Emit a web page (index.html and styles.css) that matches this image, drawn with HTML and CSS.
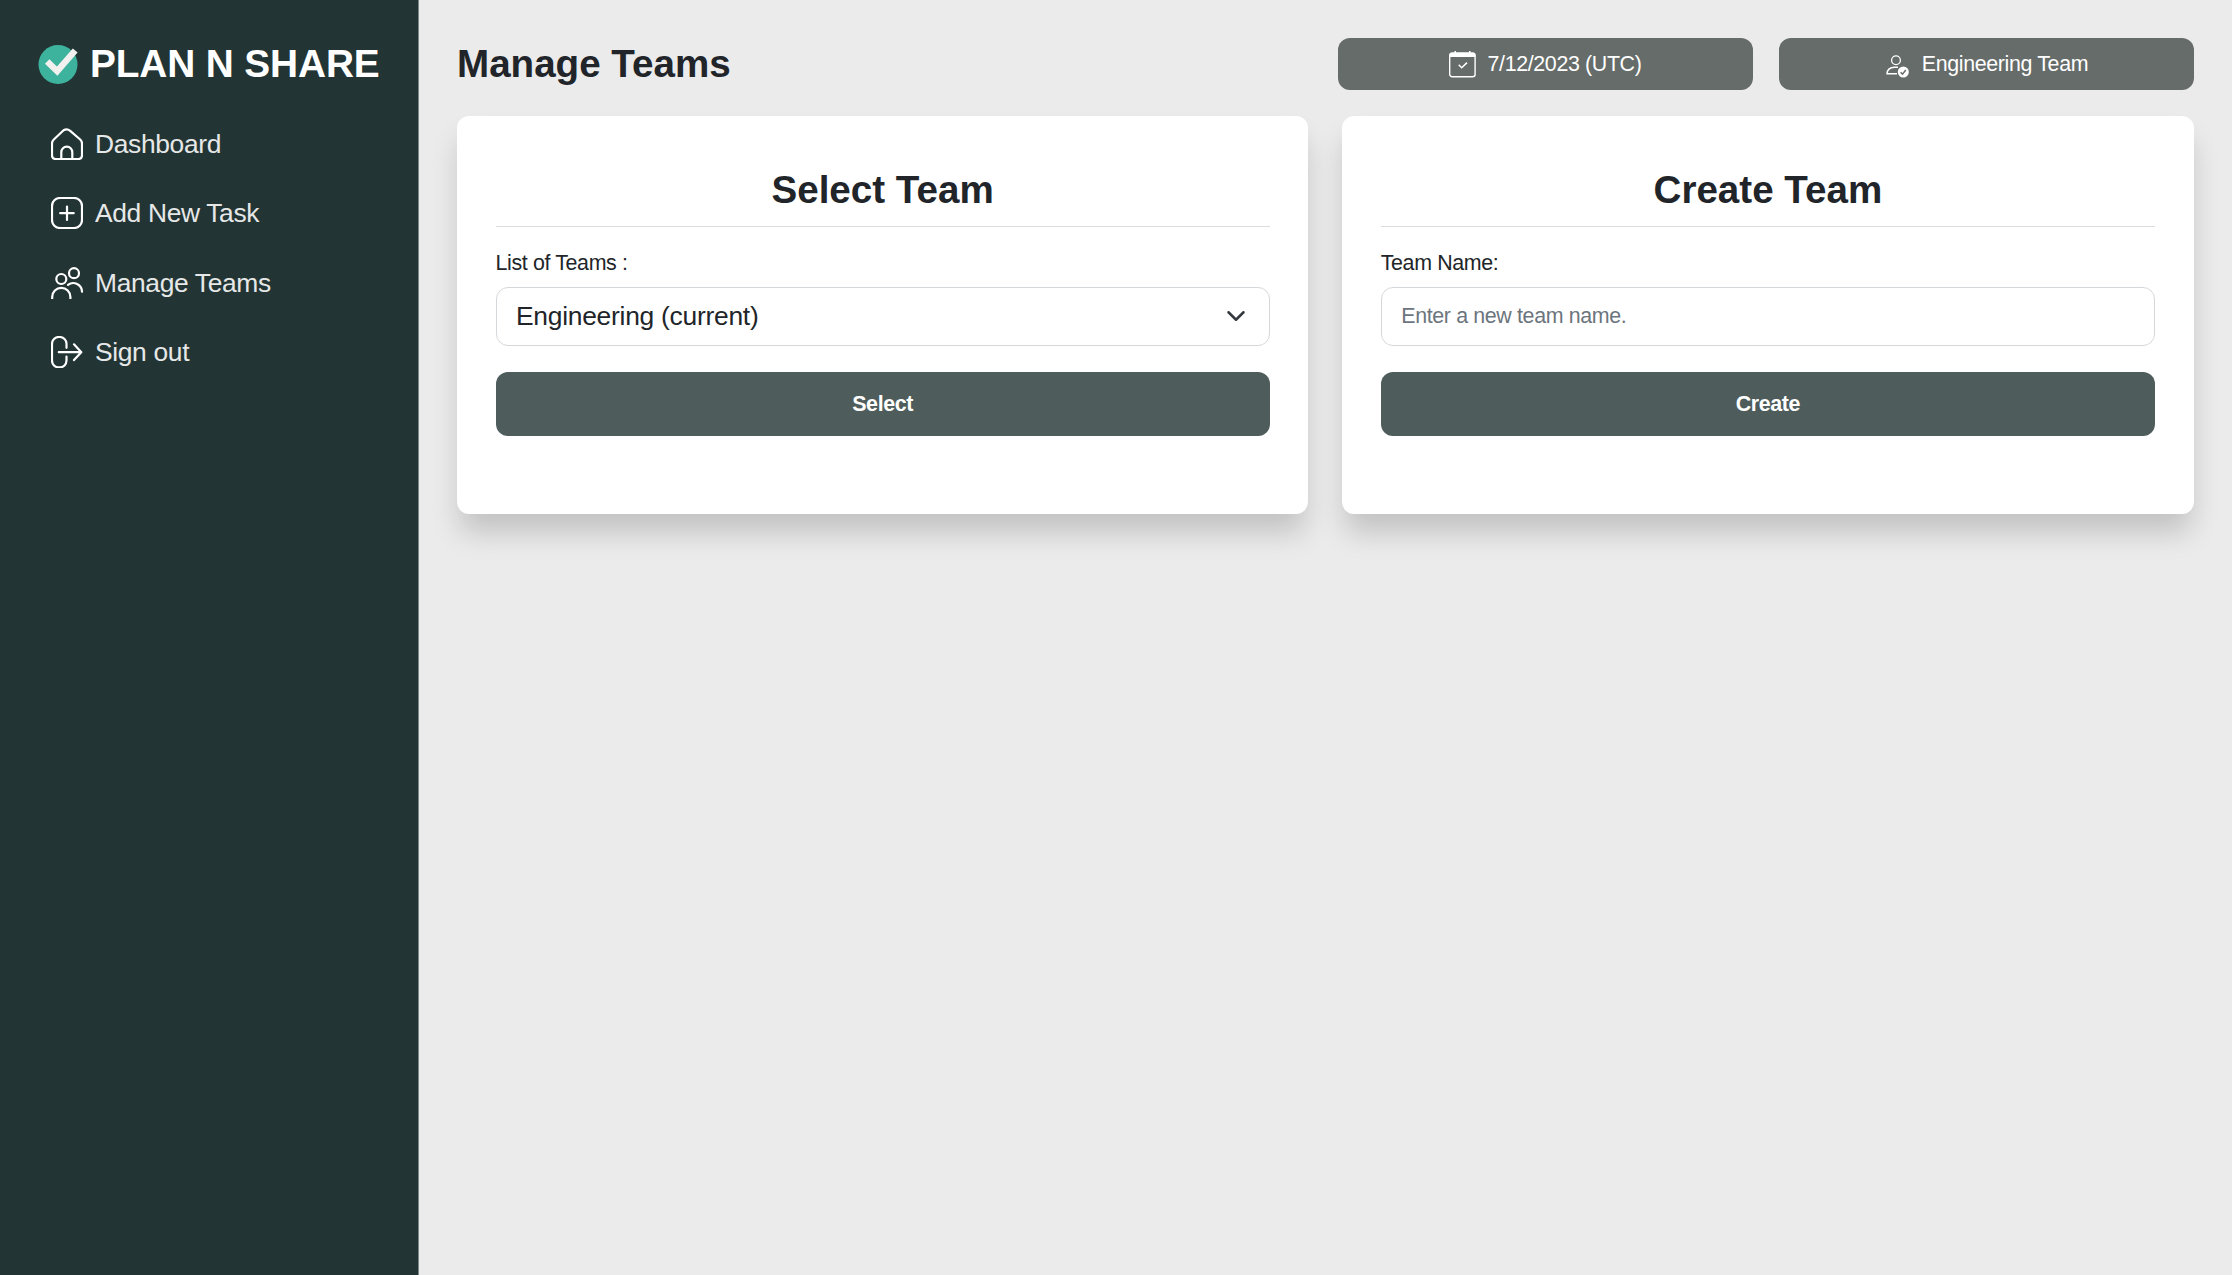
FILE: index.html
```html
<!DOCTYPE html>
<html lang="en">
<head>
<meta charset="utf-8">
<title>Plan N Share - Manage Teams</title>
<link rel="stylesheet" href="styles.css">
</head>
<body>
<div class="app">
  <aside class="sidebar">
    <a class="brand">
      <svg class="brand-icon" viewBox="0 0 40 40"><circle cx="20" cy="20.500" r="19.500" fill="#3db39e"/><path d="M9.200 17.500l10 9.700L37.200 6.500" fill="none" stroke="#f2f1ef" stroke-width="6.400"/></svg>
      <span>PLAN N SHARE</span>
    </a>
    <nav class="menu">
      <a class="menu-item"><svg class="menu-icon" viewBox="0 0 32 32"><path d="M12.600 2.300Q16 .2 19.200 2.800L29.200 11.500Q31 13.200 31 15.500V27.500Q31 31 27.500 31H4.500Q1 31 1 27.500V15.500Q1 13.200 2.800 11.500L12.600 2.300zM10.300 31V24.200a5.500 5.500 0 0 1 11 0V31"/></svg><span>Dashboard</span></a>
      <a class="menu-item"><svg class="menu-icon" viewBox="0 0 32 32"><rect x="1" y="1" width="30" height="30" rx="8"/><path d="M16 9.500v13.500M9.200 16.200h13.500"/></svg><span>Add New Task</span></a>
      <a class="menu-item"><svg class="menu-icon" viewBox="0 0 32 32"><circle cx="10.300" cy="12" r="5"/><circle cx="23" cy="6.200" r="5"/><path d="M1.200 31.500v-1.500a9.100 9.100 0 0 1 18.200 0v1.500M17 17.800a8.800 8.800 0 0 1 14 6.900"/></svg><span>Manage Teams</span></a>
      <a class="menu-item"><svg class="menu-icon" viewBox="0 0 32 32"><path d="M15.500 11.800V7.800a6.800 6.800 0 0 0-6.800-6.800h-.900A6.800 6.800 0 0 0 1 7.800V24.600a6.800 6.800 0 0 0 6.800 6.800h.9a6.800 6.800 0 0 0 6.800-6.800v-4M7.800 16.200H30.300M23 8.300l7.300 7.900-7.300 7.900"/></svg><span>Sign out</span></a>
    </nav>
  </aside>
  <main class="content">
    <header class="topbar">
      <h1 class="title">Manage Teams</h1>
      <div class="pills">
        <div class="pill">
          <svg class="pill-calendar" viewBox="0 0 27 27"><rect x=".7" y="2.200" width="25.400" height="23.600" rx="2.500" fill="none" stroke="#fff" stroke-width="1.400"/><path d="M.5 6V3.800Q.5 1.500 2.800 1.500H5.500V0H7v1.500H20V0h1.500v1.500h2.600q2.300 0 2.300 2.300V6z" fill="#fff"/><path d="M9.700 13.800l3 3 5.300-5.200" fill="none" stroke="#fff" stroke-width="1.500"/></svg>
          <span>7/12/2023 (UTC)</span>
        </div>
        <div class="pill">
          <svg class="pill-user" viewBox="0 0 23 23"><circle cx="10" cy="5.300" r="4.400" fill="none" stroke="#fff" stroke-width="1.300"/><path d="M12 12.200H8.500Q1.200 12.600 1 18.700H11" fill="none" stroke="#fff" stroke-width="1.400"/><circle cx="17.300" cy="17" r="5.500" fill="#fff"/><path d="M14.600 17.200l1.900 2 3.300-4.200" fill="none" stroke="#666c69" stroke-width="1.500"/></svg>
          <span>Engineering Team</span>
        </div>
      </div>
    </header>
    <div class="cards">
      <section class="card">
        <h2 class="card-title">Select Team</h2>
        <label class="label">List of Teams :</label>
        <div class="field select"><span>Engineering (current)</span><svg class="chevron" viewBox="0 0 16 16"><path d="m2 5 6 6 6-6" fill="none" stroke="#343a40" stroke-width="2" stroke-linecap="round" stroke-linejoin="round"/></svg></div>
        <button class="button">Select</button>
      </section>
      <section class="card">
        <h2 class="card-title">Create Team</h2>
        <label class="label" for="team-name">Team Name:</label>
        <input class="field" id="team-name" placeholder="Enter a new team name.">
        <button class="button">Create</button>
      </section>
    </div>
  </main>
</div>
</body>
</html>
```
FILE: styles.css
```css
* { box-sizing: border-box; }
body { margin: 0; font: 21.4px/30px "Liberation Sans", Arial, sans-serif; letter-spacing: -.36px; color: #212529; background: #ebebeb; }
.app { display: flex; min-height: 100vh; }
.sidebar { width: 419px; flex: none; padding: 40px 38px; background: #233434; border-right: 1px solid #7d8686; color: #e6e8e8; }
.brand { display: flex; align-items: center; gap: 12px; height: 48px; font-size: 38.8px; line-height: 46px; letter-spacing: -.12px; font-weight: 700; color: #fff; white-space: nowrap; }
.brand span { padding-bottom: 1px; }
.brand-icon { width: 40px; height: 40px; flex: none; }
.menu { display: flex; flex-direction: column; padding: 21px 0 0 13px; }
.menu-item { display: flex; align-items: center; gap: 12px; height: 69.5px; font-size: 26.4px; letter-spacing: -.34px; }
.menu-icon { width: 32px; height: 32px; fill: none; stroke: #fff; stroke-width: 2.2; stroke-linecap: round; stroke-linejoin: round; }
.content { flex: 1; padding: 38px 38.5px 0 38px; }
.topbar { display: flex; justify-content: space-between; height: 78px; }
.title { margin: 0; font-size: 38.6px; line-height: 51px; font-weight: 700; letter-spacing: 0; }
.pills { display: flex; gap: 26px; }
.pill { display: flex; align-items: center; justify-content: center; width: 415px; height: 52px; border-radius: 12px; background: #666c69; color: #fff; }
.pill-calendar { width: 27px; height: 27px; margin-right: 12px; }
.pill-user { width: 23px; height: 23px; margin: 4px 13px 0 2px; }
.cards { display: grid; grid-template-columns: 1fr 1fr; gap: 34px; }
.card { display: flex; flex-direction: column; height: 398px; padding: 48px 38.5px 0; border-radius: 12px; background: #fff; box-shadow: 0 21px 29px -3px rgba(0, 0, 0, .175); }
.card-title { margin: 0 0 21px; height: 63px; border-bottom: 1px solid #d9dcdd; font-size: 38.6px; line-height: 52px; letter-spacing: 0; font-weight: 700; text-align: center; }
.label { height: 39px; }
.field { width: 100%; height: 59px; padding: 0 19.5px; border: 1px solid #d5d8db; border-radius: 12px; background: #fff; font: inherit; letter-spacing: inherit; }
.field::placeholder { color: #6c757d; opacity: 1; }
.select { display: flex; align-items: center; justify-content: space-between; padding-bottom: 1px; font-size: 26.4px; letter-spacing: -.26px; }
.chevron { width: 20px; height: 20px; margin-right: 3px; }
.button { height: 64px; margin-top: 26px; border: 0; border-radius: 12px; background: #4e5c5c; color: #fff; font: inherit; letter-spacing: inherit; font-weight: 700; }
```
